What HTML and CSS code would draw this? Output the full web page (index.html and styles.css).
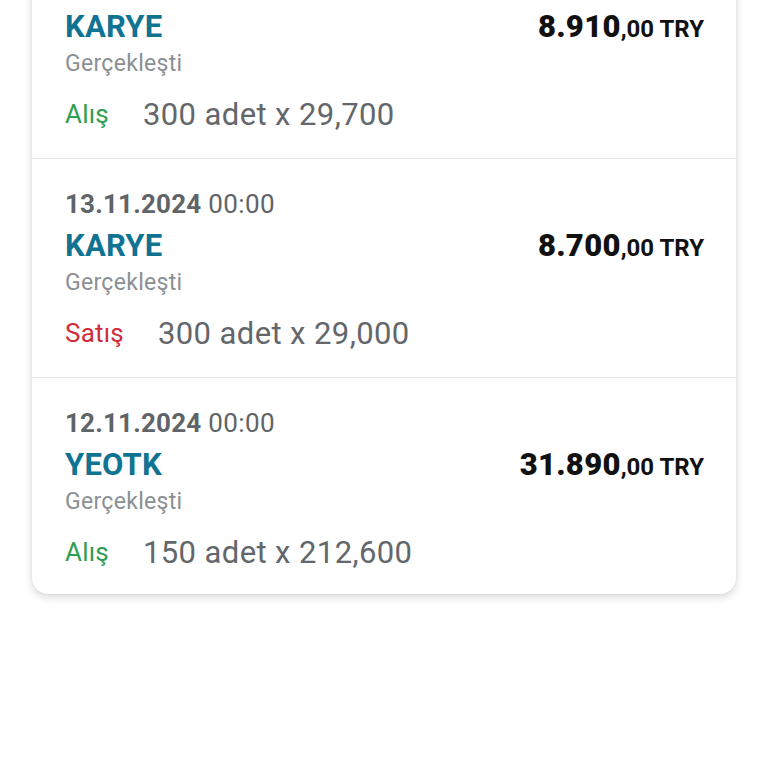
FILE: index.html
```html
<!DOCTYPE html>
<html lang="tr">
<head>
<meta charset="utf-8">
<link rel="stylesheet" href="styles.css">
</head>
<body>
<div class="page">
  <div class="card">
    <div class="item first">
      <div class="head"><span class="sym">KARYE</span><span class="amt"><b>8.910</b>,00 TRY</span></div>
      <div class="status">Gerçekleşti</div>
      <div class="qty"><span class="side buy">Alış</span><span>300 adet x 29,700</span></div>
    </div>
    <div class="item">
      <div class="date"><b>13.11.2024</b> 00:00</div>
      <div class="head"><span class="sym">KARYE</span><span class="amt"><b>8.700</b>,00 TRY</span></div>
      <div class="status">Gerçekleşti</div>
      <div class="qty"><span class="side sell">Satış</span><span>300 adet x 29,000</span></div>
    </div>
    <div class="item">
      <div class="date"><b>12.11.2024</b> 00:00</div>
      <div class="head"><span class="sym">YEOTK</span><span class="amt"><b>31.890</b>,00 TRY</span></div>
      <div class="status">Gerçekleşti</div>
      <div class="qty"><span class="side buy">Alış</span><span>150 adet x 212,600</span></div>
    </div>
  </div>
</div>
</body>
</html>
```
FILE: styles.css
```css
html, body {
  margin: 0;
  padding: 0;
  background: #ffffff;
  font-family: Roboto, "Noto Sans", sans-serif;
}
.page {
  padding: 0 32px;
  height: 768px;
  overflow: hidden;
}
.card {
  margin-top: -32px;
  background: #ffffff;
  border-radius: 16px;
  box-shadow: 0 3px 8px rgba(0, 0, 0, 0.16), 0 0 2px rgba(0, 0, 0, 0.08);
}
.item {
  padding: 27px 32px 24px 33px;
  border-bottom: 1px solid #e3e3e3;
}
.item.first {
  padding-top: 35px;
}
.item:last-child {
  border-bottom: none;
  padding-bottom: 22px;
}
.date {
  height: 36px;
  line-height: 36px;
  font-size: 26px;
  letter-spacing: 0.4px;
  color: #5f6468;
}
.date b {
  font-weight: 700;
  letter-spacing: 0.2px;
}
.head {
  display: flex;
  justify-content: space-between;
  align-items: center;
  height: 46px;
}
.sym {
  font-size: 31px;
  font-weight: 700;
  letter-spacing: 0.2px;
  color: #0f7391;
}
.amt {
  font-size: 24px;
  font-weight: 700;
  color: #111111;
}
.amt b {
  font-size: 31px;
  letter-spacing: 0.3px;
}
.status {
  height: 30px;
  line-height: 30px;
  font-size: 23px;
  letter-spacing: 0.3px;
  color: #8b9094;
}
.qty {
  margin-top: 15px;
  height: 40px;
  display: flex;
  align-items: center;
  gap: 34px;
  font-size: 31px;
  letter-spacing: 0.4px;
  color: #63676b;
}
.side {
  font-size: 26px;
  letter-spacing: 0.2px;
}
.buy {
  color: #2e9e52;
}
.sell {
  color: #d22b3a;
}
```
